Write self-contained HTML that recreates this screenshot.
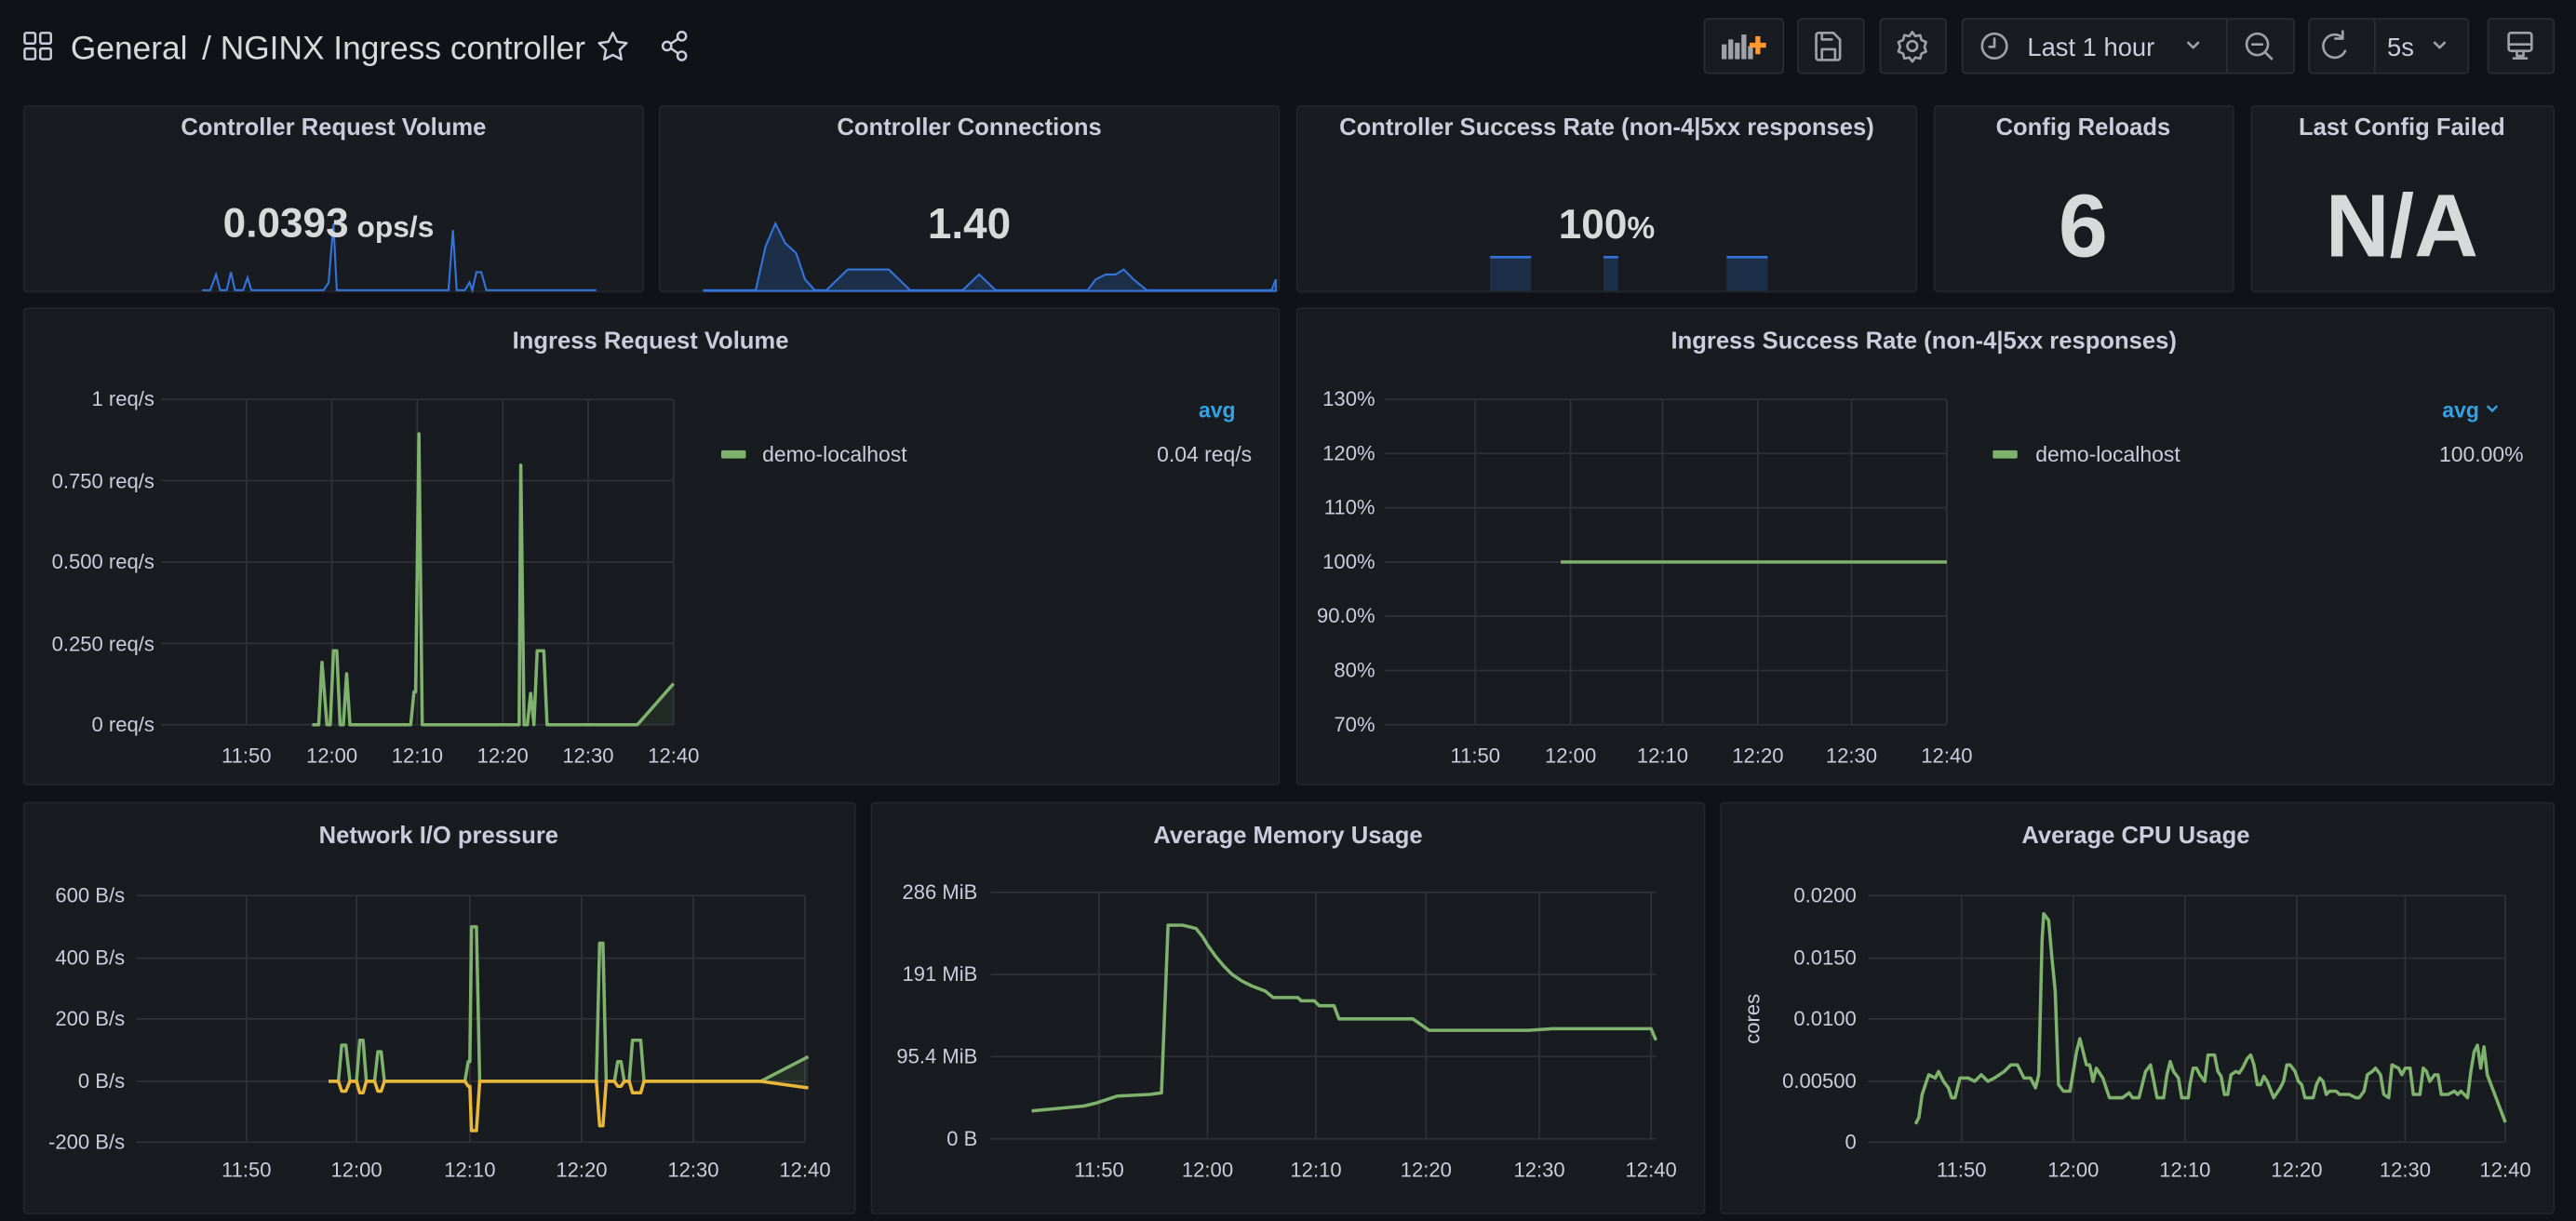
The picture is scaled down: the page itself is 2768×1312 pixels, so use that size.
<!DOCTYPE html>
<html><head><meta charset="utf-8"><style>
html,body{margin:0;padding:0;background:#111217;width:2768px;height:1312px;overflow:hidden}
svg{display:block}
text{font-family:"Liberation Sans",sans-serif}
</style></head><body>
<svg width="2768" height="1312" viewBox="0 0 1568 743" preserveAspectRatio="none" xmlns="http://www.w3.org/2000/svg">
<rect width="1568" height="743" fill="#111217"/>
<!-- header -->
<g fill="none" stroke="#ccccdc" stroke-width="1.4">
<rect x="15" y="20" width="6.5" height="6.5" rx="1"/><rect x="24.5" y="20" width="6.5" height="6.5" rx="1"/>
<rect x="15" y="29.5" width="6.5" height="6.5" rx="1"/><rect x="24.5" y="29.5" width="6.5" height="6.5" rx="1"/>
<path d="M373 20 l2.6 5.4 5.8.8 -4.2 4.1 1 5.8 -5.2-2.7 -5.2 2.7 1-5.8 -4.2-4.1 5.8-.8z" stroke-linejoin="round"/>
<circle cx="415" cy="22" r="2.6"/><circle cx="406" cy="28" r="2.6"/><circle cx="415" cy="34" r="2.6"/>
<path d="M408.3 26.6 l4.4-3 M408.3 29.4 l4.4 3"/>
</g>
<text x="43" y="36" font-size="20" fill="#d8d9da">General</text>
<text x="123" y="36" font-size="20" fill="#d8d9da">/ NGINX Ingress controller</text>
<!-- buttons -->
<g fill="#181b1f" stroke="#2a2d33" stroke-width="1">
<rect x="1037.5" y="11.5" width="48" height="33" rx="2"/>
<rect x="1094.5" y="11.5" width="40" height="33" rx="2"/>
<rect x="1144.5" y="11.5" width="40" height="33" rx="2"/>
<rect x="1194.5" y="11.5" width="202" height="33" rx="2"/>
<rect x="1405.5" y="11.5" width="97" height="33" rx="2"/>
<rect x="1514.5" y="11.5" width="40" height="33" rx="2"/>
</g>
<path d="M1355.5 12 v32 M1445.5 12 v32" stroke="#2a2d33"/>
<g fill="#9fa1a8"><rect x="1048" y="27" width="3" height="9"/><rect x="1052" y="24" width="3" height="12"/><rect x="1056" y="26" width="3" height="10"/><rect x="1060" y="21" width="3" height="15"/><rect x="1064" y="28" width="3" height="8"/></g>
<path d="M1070 22 v11 M1065 27.5 h10" stroke="#ff9830" stroke-width="3"/>
<g fill="none" stroke="#9fa1a8" stroke-width="1.5" stroke-linecap="round" stroke-linejoin="round">
<path d="M1107 20 h9 l4 4 v11 a1.5 1.5 0 0 1-1.5 1.5 h-11.5 a1.5 1.5 0 0 1-1.5-1.5 v-13.5 a1.5 1.5 0 0 1 1.5-1.5z M1109 36 v-6 h8 v6 M1109 20 v4 h6"/>
<circle cx="1164" cy="28" r="3"/>
<path d="M1164 19.5 l1.8 2.5 3-.6 .8 3 2.8 1.2 -1 2.9 1 2.9 -2.8 1.2 -.8 3 -3-.6 -1.8 2.5 -1.8-2.5 -3 .6 -.8-3 -2.8-1.2 1-2.9 -1-2.9 2.8-1.2 .8-3 3 .6z"/>
<circle cx="1214" cy="28" r="7.5"/><path d="M1214 23.5 v5 h-3"/>
<path d="M1332 26 l3 3 3-3"/>
<circle cx="1374" cy="27" r="6.5"/><path d="M1371 27 h6 M1378.8 31.8 l4 4"/>
<path d="M1431 23 a7 7 0 1 0 1.5 8 M1431 19 v4.5 h-4.5" transform="translate(-5 0)"/>
<path d="M1482 26 l3 3 3-3"/>
<rect x="1527" y="20" width="14" height="11" rx="1.5"/><path d="M1527 27 h14 M1532 31 v3 h4 v-3 M1530 35.5 h8"/>
</g>
<text x="1234" y="34" font-size="15.5" fill="#ccccdc">Last 1 hour</text>
<text x="1453" y="34" font-size="15.5" fill="#ccccdc">5s</text>

<!-- panels -->
<g fill="#181b1f" stroke="#22252b" stroke-width="1">
<rect x="14.5" y="64.5" width="377" height="113" rx="2"/>
<rect x="401.5" y="64.5" width="377" height="113" rx="2"/>
<rect x="789.5" y="64.5" width="377" height="113" rx="2"/>
<rect x="1177.5" y="64.5" width="182" height="113" rx="2"/>
<rect x="1370.5" y="64.5" width="184" height="113" rx="2"/>
<rect x="14.5" y="187.5" width="764" height="290" rx="2"/>
<rect x="789.5" y="187.5" width="765" height="290" rx="2"/>
<rect x="14.5" y="488.5" width="506" height="250" rx="2"/>
<rect x="530.5" y="488.5" width="507" height="250" rx="2"/>
<rect x="1047.5" y="488.5" width="507" height="250" rx="2"/>
</g>
<g font-size="14.5" font-weight="bold" fill="#ccccdc" text-anchor="middle">
<text x="203" y="82">Controller Request Volume</text>
<text x="590" y="82">Controller Connections</text>
<text x="978" y="82">Controller Success Rate (non-4|5xx responses)</text>
<text x="1268" y="82">Config Reloads</text>
<text x="1462" y="82">Last Config Failed</text>
<text x="396" y="212">Ingress Request Volume</text>
<text x="1171" y="212">Ingress Success Rate (non-4|5xx responses)</text>
<text x="267" y="513">Network I/O pressure</text>
<text x="784" y="513">Average Memory Usage</text>
<text x="1300" y="513">Average CPU Usage</text>
</g>
<!-- sparklines -->
<path d="M123 176.6 L128 176.6 131.5 167 134 176.6 138 176.6 140.6 165.6 143 176.6 148 176.6 150.7 169 153 176.6 197 176.6 200 172 203 136 205 176.6 207 176.6 273 176.6 275.7 140 278 176.6 283 176.6 285.8 171.8 287.5 176.6 290 165.6 293 165.6 296 176.6 363 176.6" fill="none" stroke="#3274d9" stroke-width="1.2"/>
<path d="M428.5 176.6 L460 176.6 466 150 472 136 478 148 484.6 154 490 170 496 176.6 503 176.6 516 164 541 164 554 176.6 586 176.6 596 167 606 176.6 662 176.6 667 170 673 167 679 167 684 164 690 170 698 176.6 754 176.6 774 176.6 776.6 170 L776.6 177 428.5 177z" fill="rgba(50,116,217,0.22)" stroke="#3274d9" stroke-width="1.2"/>
<g fill="rgba(50,116,217,0.22)"><rect x="907" y="156" width="25" height="21"/><rect x="976" y="156" width="9" height="21"/><rect x="1051" y="156" width="25" height="21"/></g>
<g stroke="#3274d9" stroke-width="1.5"><path d="M907 156.5h25M976 156.5h9M1051 156.5h25"/></g>
<text x="200" y="144" text-anchor="middle" fill="#d8d9da" font-weight="bold"><tspan font-size="25">0.0393</tspan><tspan font-size="18"> ops/s</tspan></text>
<text x="590" y="145" text-anchor="middle" fill="#d8d9da" font-weight="bold" font-size="26">1.40</text>
<text x="978" y="145" text-anchor="middle" fill="#d8d9da" font-weight="bold"><tspan font-size="25">100</tspan><tspan font-size="19">%</tspan></text>
<text x="1268" y="156" text-anchor="middle" fill="#d8d9da" font-weight="bold" font-size="54">6</text>
<text x="1462" y="156" text-anchor="middle" fill="#d8d9da" font-weight="bold" font-size="54">N/A</text>

<!-- Ingress request volume -->
<g stroke="#2f3136" stroke-width="1">
<path d="M98 243H410M98 292.5H410M98 342H410M98 391.5H410M98 441H410M150 243V441M202 243V441M254 243V441M306 243V441M358 243V441M410 243V441"/>
<path d="M843 243H1185M843 276H1185M843 309H1185M843 342H1185M843 375H1185M843 408H1185M843 441H1185M898 243V441M956 243V441M1012 243V441M1070 243V441M1127 243V441M1185 243V441"/>
<path d="M83 545H490M83 583H490M83 620H490M83 658H490M83 695H490M150 545V695M217 545V695M286 545V695M354 545V695M422 545V695M490 545V695"/>
<path d="M603 543H1008M603 593H1008M603 643H1008M603 693H1008M669 543V693M735 543V693M801 543V693M868 543V693M937 543V693M1005 543V693"/>
<path d="M1137 545H1525M1137 583H1525M1137 620H1525M1137 658H1525M1137 695H1525M1194 545V695M1262 545V695M1330 545V695M1398 545V695M1464 545V695M1525 545V695"/>
</g>
<g font-size="12.5" fill="#ccccdc" text-anchor="end">
<text x="94" y="247">1 req/s</text><text x="94" y="297">0.750 req/s</text><text x="94" y="346">0.500 req/s</text><text x="94" y="396">0.250 req/s</text><text x="94" y="445">0 req/s</text>
<text x="837" y="247">130%</text><text x="837" y="280">120%</text><text x="837" y="313">110%</text><text x="837" y="346">100%</text><text x="837" y="379">90.0%</text><text x="837" y="412">80%</text><text x="837" y="445">70%</text>
<text x="76" y="549">600 B/s</text><text x="76" y="587">400 B/s</text><text x="76" y="624">200 B/s</text><text x="76" y="662">0 B/s</text><text x="76" y="699">-200 B/s</text>
<text x="595" y="547">286 MiB</text><text x="595" y="597">191 MiB</text><text x="595" y="647">95.4 MiB</text><text x="595" y="697">0 B</text>
<text x="1130" y="549">0.0200</text><text x="1130" y="587">0.0150</text><text x="1130" y="624">0.0100</text><text x="1130" y="662">0.00500</text><text x="1130" y="699">0</text>
</g>
<g font-size="12.5" fill="#ccccdc" text-anchor="middle">
<text x="150" y="464">11:50</text><text x="202" y="464">12:00</text><text x="254" y="464">12:10</text><text x="306" y="464">12:20</text><text x="358" y="464">12:30</text><text x="410" y="464">12:40</text>
<text x="898" y="464">11:50</text><text x="956" y="464">12:00</text><text x="1012" y="464">12:10</text><text x="1070" y="464">12:20</text><text x="1127" y="464">12:30</text><text x="1185" y="464">12:40</text>
<text x="150" y="716">11:50</text><text x="217" y="716">12:00</text><text x="286" y="716">12:10</text><text x="354" y="716">12:20</text><text x="422" y="716">12:30</text><text x="490" y="716">12:40</text>
<text x="669" y="716">11:50</text><text x="735" y="716">12:00</text><text x="801" y="716">12:10</text><text x="868" y="716">12:20</text><text x="937" y="716">12:30</text><text x="1005" y="716">12:40</text>
<text x="1194" y="716">11:50</text><text x="1262" y="716">12:00</text><text x="1330" y="716">12:10</text><text x="1398" y="716">12:20</text><text x="1464" y="716">12:30</text><text x="1525" y="716">12:40</text>
</g>
<text transform="translate(1071 620) rotate(-90)" font-size="12.5" fill="#ccccdc" text-anchor="middle">cores</text>

<!-- legends -->
<rect x="439" y="274" width="15" height="5" rx="1" fill="#7eb26d"/>
<text x="464" y="281" font-size="13" fill="#ccccdc">demo-localhost</text>
<text x="762" y="281" font-size="13" fill="#ccccdc" text-anchor="end">0.04 req/s</text>
<text x="752" y="254" font-size="13" font-weight="bold" fill="#33a2e5" text-anchor="end">avg</text>
<rect x="1213" y="274" width="15" height="5" rx="1" fill="#7eb26d"/>
<text x="1239" y="281" font-size="13" fill="#ccccdc">demo-localhost</text>
<text x="1536" y="281" font-size="13" fill="#ccccdc" text-anchor="end">100.00%</text>
<text x="1509" y="254" font-size="13" font-weight="bold" fill="#33a2e5" text-anchor="end">avg</text>
<path d="M1514 247 l3 3 3-3" fill="none" stroke="#33a2e5" stroke-width="1.4"/>

<!-- series -->
<g fill="none" stroke="#7eb26d" stroke-width="2" stroke-linejoin="round">
<path d="M190 441 L194 441 196 403 199 441 201 441 203 396 205 396 207 441 209 441 211 410 213 441 250 441 252 421 253 421 255 264 257 441 316 441 317 283 319 441 321 441 323 422 325 441 327 396 331 396 333 441 388 441 410 416"/>
<path d="M388 441 L410 416 410 441z" fill="rgba(126,178,109,0.1)" stroke="none"/>
<path d="M950 342 H1185"/>
<path d="M200 658 L206 658 208 636 210.5 636 213 658 217 658 219 633 221 633 223 658 228 658 230 640 232 640 234 658 283 658 285 646 286 646 287 564 290 564 292 658 363 658 365 574 367 574 369 658 374 658 376 646 378 646 380 658 383 658 385 633 390 633 392 658 463 658 492 643"/>
<path d="M463 658 L492 643 492 662z" fill="rgba(126,178,109,0.12)" stroke="none"/>
<path d="M628 676 L660 673 668 671 680 667 700 666 707 665 711 563 720 563 728 565 732 570 735 575 740 582 745 588 750 593 756 597 762 600 770 603 775 607 790 607 792 609 800 609 803 612 812 612 815 620 860 620 870 627 930 627 945 626 1005 626 1008 633"/>
<path d="M1166 684 L1168 680 1170 666 1172 660 1174 654 1178 656 1180 652 1183 658 1186 662 1188 668 1190 668 1193 656 1198 656 1202 658 1206 654 1210 658 1214 656 1220 652 1224 648 1228 648 1232 656 1236 656 1239 662 1241 654 1243 572 1244 556 1247 560 1249 583 1251 603 1253 660 1256 664 1260 664 1262 652 1264 640 1266 632 1268 640 1270 648 1272 648 1274 658 1276 650 1280 656 1282 662 1284 668 1292 668 1296 665 1298 668 1302 668 1304 660 1306 652 1309 648 1311 658 1313 668 1317 668 1319 654 1321 646 1323 652 1326 656 1328 668 1332 668 1333 660 1335 650 1337 650 1339 654 1342 658 1344 642 1348 642 1350 652 1352 655 1354 666 1356 666 1358 654 1361 652 1363 653 1365 650 1368 644 1370 642 1372 648 1374 660 1376 660 1378 655 1380 658 1384 668 1388 662 1390 658 1392 648 1394 648 1397 652 1399 658 1401 660 1403 668 1408 668 1410 660 1412 656 1414 658 1416 666 1418 664 1422 664 1424 666 1430 666 1434 668 1436 668 1439 664 1441 654 1444 652 1446 650 1449 654 1451 666 1454 668 1456 648 1460 650 1462 654 1464 650 1467 650 1469 666 1473 666 1475 650 1477 652 1479 658 1482 654 1484 654 1486 666 1490 666 1494 664 1496 666 1498 664 1500 666 1502 668 1504 652 1506 640 1508 636 1510 650 1512 637 1514 654 1525 683"/>
</g>
<path d="M200 658 L206 658 208 664 210.5 664 213 658 217 658 219 665 221 665 223 658 228 658 230 664 232 664 234 658 283 658 285 661 286 661 287 688 290 688 292 658 363 658 365 685 367 685 369 658 374 658 376 661 378 661 380 658 383 658 385 665 390 665 392 658 463 658 492 662" fill="none" stroke="#eab839" stroke-width="2" stroke-linejoin="round"/>
</svg>
</body></html>
